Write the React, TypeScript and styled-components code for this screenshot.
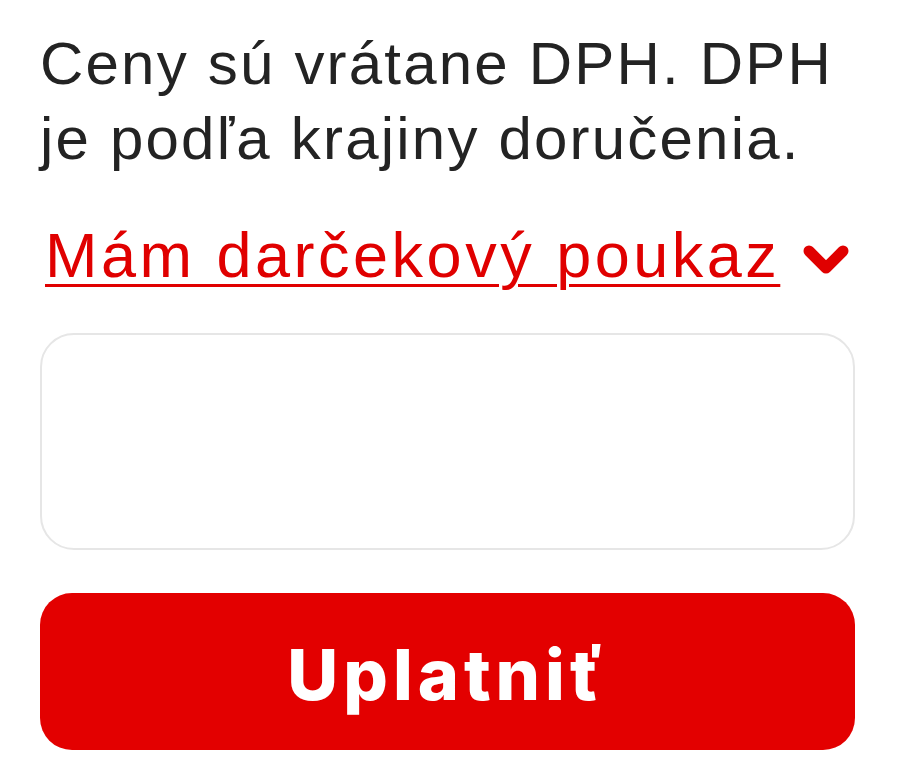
import styled, { createGlobalStyle } from 'styled-components';

const GlobalStyle = createGlobalStyle`
  body {
    margin: 0;
    background: #fff;
  }
`;

const Panel = styled.div`
  width: 815px;
  padding: 26px 0 0 40px;
  display: flex;
  flex-direction: column;
`;

const Note = styled.p`
  margin: 0;
  font-family: "Liberation Sans", Arial, sans-serif;
  font-size: 60px;
  letter-spacing: 2.2px;
  line-height: 75px;
  color: #232323;
`;

const VoucherToggle = styled.button`
  margin-top: 42px;
  padding: 0 0 0 5px;
  border: 0;
  background: transparent;
  display: flex;
  align-items: center;
  justify-content: space-between;
  width: 100%;
  cursor: pointer;
  color: #e00000;
`;

const ToggleLabel = styled.span`
  font-family: "Liberation Sans", Arial, sans-serif;
  font-size: 63px;
  letter-spacing: 3.5px;
  line-height: 75px;
  text-decoration: underline;
  text-decoration-thickness: 3px;
  text-underline-offset: 7px;
`;

const Chevron = styled.svg`
  width: 46px;
  height: 32px;
  margin-right: 6px;
  margin-top: 8px;
`;

const CodeInput = styled.input`
  margin-top: 40px;
  height: 217px;
  box-sizing: border-box;
  border: 2px solid #e6e6e6;
  border-radius: 34px;
  padding: 0 30px;
  font-family: "Liberation Sans", Arial, sans-serif;
  font-size: 48px;
  outline: none;
`;

const ApplyButton = styled.button`
  margin-top: 43px;
  height: 157px;
  border: 0;
  border-radius: 32px;
  background: #e30000;
  color: #fff;
  font-family: Inter, "Noto Sans", sans-serif;
  font-weight: 800;
  font-size: 70px;
  letter-spacing: 5px;
  padding-top: 6px;
  cursor: pointer;
`;

export default function App() {
  return (
    <>
      <GlobalStyle />
      <Panel>
        <Note>Ceny sú vrátane DPH. DPH je podľa krajiny doručenia.</Note>
        <VoucherToggle type="button">
          <ToggleLabel>Mám darčekový poukaz</ToggleLabel>
          <Chevron viewBox="0 0 46 32">
            <polyline points="6,7 23,24 40,7" fill="none" stroke="#e00000" strokeWidth="11" strokeLinecap="round" strokeLinejoin="round" />
          </Chevron>
        </VoucherToggle>
        <CodeInput type="text" />
        <ApplyButton type="button">Uplatniť</ApplyButton>
      </Panel>
    </>
  );
}
